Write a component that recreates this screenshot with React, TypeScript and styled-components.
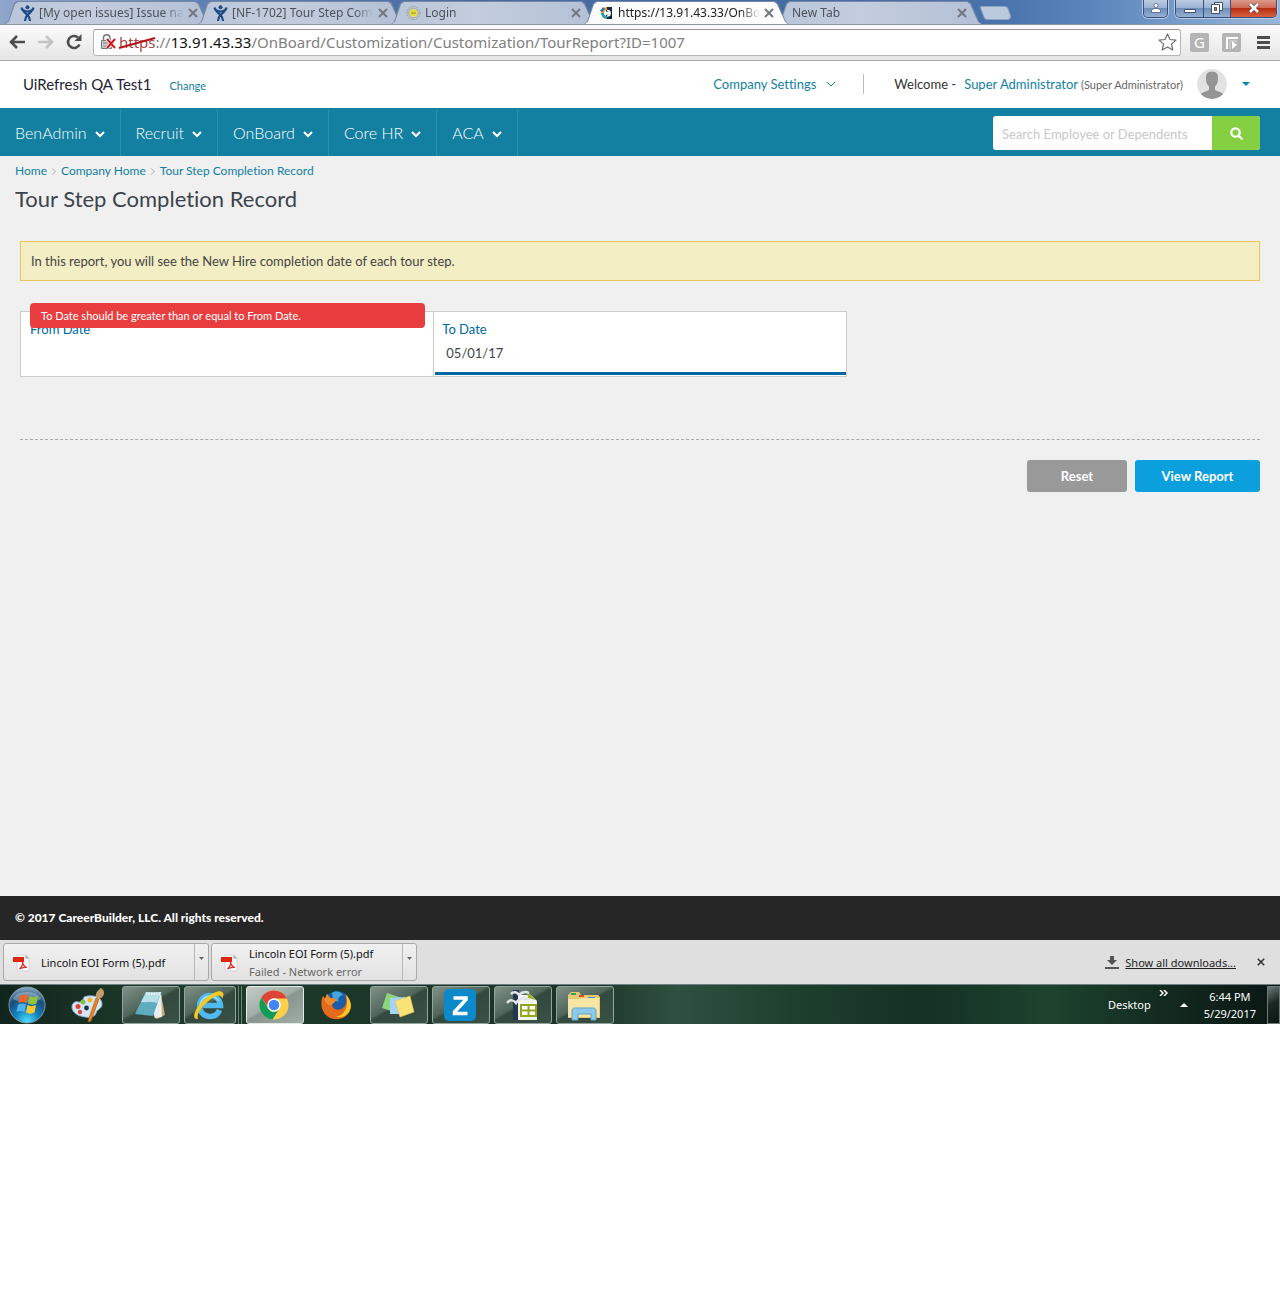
import React from 'react';
import styled, { createGlobalStyle, css } from 'styled-components';

const ui = `'Noto Sans', 'Open Sans', sans-serif`;
const lato = `Lato, 'Open Sans', sans-serif`;

const Global = createGlobalStyle`
  *, *::before, *::after { box-sizing: border-box; }
  body { margin: 0; background: #fff; font-family: ${lato}; font-size: 13px; color: #333; font-variant-ligatures: none; }
  button, input { font: inherit; color: inherit; margin: 0; padding: 0; border: 0; background: none; outline: 0; font-variant-ligatures: none; }
  button { cursor: pointer; }
  a { color: #1380a1; text-decoration: none; }
  svg { display: block; flex: none; }
  ul, ol { list-style: none; margin: 0; padding: 0; }
  h1, p { margin: 0; }
`;

/* ---------- browser frame ---------- */

const TabStrip = styled.div`
  display: flex;
  align-items: flex-end;
  height: 24px;
  padding-left: 5px;
  font-family: ${ui};
  font-size: 12px;
  background: linear-gradient(90deg, #8fa6cb 0, #5f80b3 16%, #46699f 40%, #456ba3 60%, #4a72ab 78%, #5d87bd 86%, #7fa3cf 94%, #9ab5d8 100%);
`;

const Tab = styled.div<{ $active?: boolean }>`
  position: relative;
  display: flex;
  align-items: center;
  gap: 4px;
  width: 205px;
  height: 23px;
  margin-right: -12px;
  padding: 0 15px 0 15px;
  z-index: ${p => (p.$active ? 2 : 1)};
  color: ${p => (p.$active ? '#222' : '#4d5159')};
  isolation: isolate;
  &::before, &::after {
    content: '';
    position: absolute;
    z-index: -1;
    inset: 0;
    background: #7688a6;
    clip-path: polygon(0 100%, 3px 90%, 9px 10%, 12px 0, 191px 0, 194px 10%, 202px 90%, 205px 100%);
  }
  &::after {
    inset: 1px 1px 0;
    background: ${p => (p.$active ? '#fcfcfc' : 'linear-gradient(90deg, #b9c5da, #c3cddd 40%, #b4c0d6)')};
    clip-path: polygon(0 100%, 3px 90%, 9px 10%, 12px 0, 189px 0, 192px 10%, 200px 90%, 203px 100%);
  }
`;

const TabTitle = styled.span`
  flex: 1;
  white-space: nowrap;
  mask-image: linear-gradient(90deg, #000 calc(100% - 20px), transparent);
`;

const TabClose = styled.button`
  display: flex;
  color: #74777d;
`;

const NewTabButton = styled.button`
  width: 28px;
  height: 14px;
  margin: 0 0 4px 12px;
  border: 1px solid #8fa3c3;
  border-radius: 2px 3px 5px 3px;
  background: #bccadd;
  transform: skewX(20deg);
`;

const WindowControls = styled.div`
  display: flex;
  align-self: flex-start;
  gap: 7px;
  margin-left: auto;
  padding-right: 3px;
`;

const ControlGroup = styled.div`
  display: flex;
  height: 18px;
  border: 1px solid #39507a;
  border-top: 0;
  border-radius: 0 0 5px 5px;
  overflow: hidden;
  box-shadow: 0 0 0 1px #b9cbe4;
`;

const ControlButton = styled.button<{ $wide?: boolean; $small?: boolean }>`
  display: flex;
  align-items: center;
  justify-content: center;
  width: ${p => (p.$wide ? 46 : p.$small ? 23 : 27)}px;
  padding-bottom: 2px;
  background: ${p => (p.$wide ? 'linear-gradient(#dc9a8c 0, #cd6a56 45%, #bb2b12 50%, #d4613f)' : 'linear-gradient(#bccce2 0, #9db3d3 45%, #6f8fbb 50%, #93b0d4)')};
  & + & { border-left: 1px solid #39507a; }
`;

const Toolbar = styled.div`
  display: flex;
  align-items: center;
  height: 37px;
  padding: 0 10px 1px 9px;
  background: linear-gradient(#fbfbfb, #e6e6e6);
  border-top: 1px solid #8c96a5;
  border-bottom: 1px solid #a9a9a9;
  font-family: ${ui};
`;

const ToolButton = styled.button`
  display: flex;
  align-items: center;
  margin-right: 12px;
`;

const Omnibox = styled.div`
  display: flex;
  flex: 1;
  align-items: center;
  height: 27px;
  margin: 0 9px 0 -1px;
  padding: 0 3px 0 6px;
  background: #fff;
  border: 1px solid #b5b5b5;
  border-top-color: #999;
  border-radius: 3px;
  font-size: 15px;
  color: #808080;
`;

const SiteInfo = styled.button`
  position: relative;
  display: flex;
  align-items: center;
  gap: 2px;
  color: #a5474b;
`;

const Strike = styled.svg`
  position: absolute;
  right: 0;
  top: 4px;
`;

const Host = styled.span`
  color: #111;
`;

const PathInput = styled.input`
  flex: 1;
  min-width: 0;
`;

const Extensions = styled.div`
  display: flex;
  align-items: center;
  gap: 13px;
`;

const ExtButton = styled.button`
  display: flex;
  align-items: center;
  justify-content: center;
  width: 19px;
  height: 19px;
  border-radius: 2px;
  background: #b4b4b4;
  color: #fff;
  font-size: 15px;
  line-height: 19px;
`;

const MenuButton = styled.button`
  display: flex;
  margin-left: 3px;
`;

/* ---------- application ---------- */

const Header = styled.header`
  display: flex;
  align-items: center;
  height: 47px;
  padding: 0 30px 2px 23px;
  background: #fff;
`;

const Company = styled.span`
  font-size: 15px;
  color: #1d2433;
`;

const ChangeLink = styled.a`
  margin: 3px auto 0 18px;
  font-size: 11px;
`;

const SettingsLink = styled.button`
  display: flex;
  align-items: center;
  gap: 10px;
  height: 20px;
  padding-right: 27px;
  border-right: 1px solid #bbb;
  color: #1380a1;
  font-size: 13px;
`;

const Welcome = styled.div`
  display: flex;
  align-items: baseline;
  margin: 0 14px 0 30px;
  font-size: 13px;
  a { margin: 0 3px 0 8px; }
  small { font-size: 11px; color: #666; }
`;

const AccountButton = styled.button`
  display: flex;
  align-items: center;
  gap: 15px;
`;

const Nav = styled.nav`
  display: flex;
  align-items: center;
  justify-content: space-between;
  height: 48px;
  padding-right: 20px;
  background: #1380a1;
`;

const NavList = styled.ul`
  display: flex;
  align-self: flex-end;
`;

const NavButton = styled.button`
  display: flex;
  align-items: center;
  gap: 8px;
  height: 46px;
  padding: 0 15px 2px 15px;
  border-right: 1px solid #2e8fad;
  color: #fff;
  font-size: 16px;
  font-weight: 300;
  svg { margin-top: 3px; }
`;

const Search = styled.form`
  display: flex;
  width: 267px;
  height: 34px;
  margin-top: 2px;
  border-radius: 3px;
  overflow: hidden;
  background: #fff;
  input { flex: 1; min-width: 0; padding: 2px 9px 0; font-size: 13px; }
  input::placeholder { color: #c8c8c8; opacity: 1; }
  button { display: flex; align-items: center; justify-content: center; width: 48px; background: #84d042; }
`;

const Main = styled.main`
  min-height: 740px;
  padding: 7px 15px 0;
  background: #f0f0f0;
`;

const Crumbs = styled.ol`
  display: flex;
  font-size: 12px;
  line-height: 16px;
  li { display: flex; align-items: center; }
  li + li::before {
    content: '';
    width: 5px;
    height: 5px;
    margin: 0 6px 0 3px;
    border: solid #c4c4c4;
    border-width: 1px 1px 0 0;
    transform: rotate(45deg);
  }
`;

const Title = styled.h1`
  margin-top: 6px;
  font-size: 22px;
  line-height: 28px;
  font-weight: 400;
  color: #3c434d;
`;

const Body = styled.div`
  padding: 28px 5px 0;
`;

const Notice = styled.p`
  padding: 0 10px;
  border: 1px solid #e8c556;
  background: #f4eec5;
  line-height: 38px;
  color: #444;
`;

const Fields = styled.div`
  display: grid;
  grid-template-columns: 1fr 1fr;
  width: calc(200% / 3);
  margin-top: 30px;
  border: 1px solid #ccc;
  background: #fff;
`;

const Field = styled.div<{ $focused?: boolean }>`
  position: relative;
  display: flex;
  flex-direction: column;
  height: 64px;
  padding: 7px 9px 0;
  & + & { padding-left: 8px; border-left: 1px solid #ccc; }
  label { line-height: 20px; color: #0067a3; }
  input { height: 20px; margin-top: 4px; padding: 0 4px; color: #444; }
  ${p => p.$focused && css`
    &::after { content: ''; position: absolute; left: 1px; right: 0; bottom: 1px; height: 3px; background: #0067a3; }
  `}
`;

const FieldError = styled.div`
  position: absolute;
  top: -9px;
  left: 9px;
  right: 8px;
  padding: 0 11px;
  border-radius: 4px;
  background: #e83e3f;
  color: #fff;
  font-size: 11px;
  line-height: 25px;
`;

const Actions = styled.div`
  display: flex;
  justify-content: flex-end;
  gap: 8px;
  margin-top: 62px;
  padding-top: 20px;
  border-top: 1px dashed #aaa;
`;

const ActionButton = styled.button<{ $primary?: boolean }>`
  width: ${p => (p.$primary ? 125 : 100)}px;
  height: 32px;
  padding-bottom: 1px;
  border-radius: 3px;
  background: ${p => (p.$primary ? '#0b9fde' : '#999')};
  color: #fff;
  font-size: 13px;
  font-weight: 700;
`;

const Footer = styled.footer`
  padding: 0 15px;
  background: #262626;
  color: #fff;
  font-size: 12px;
  font-weight: 900;
  line-height: 44px;
`;

/* ---------- download shelf ---------- */

const Shelf = styled.div`
  display: flex;
  align-items: center;
  gap: 2px;
  height: 44px;
  padding: 0 15px 0 3px;
  background: #dfdfdf;
  font-family: ${ui};
  font-size: 11px;
`;

const Download = styled.div`
  display: flex;
  width: 206px;
  height: 38px;
  border: 1px solid #a9a9a9;
  border-radius: 3px;
  background: linear-gradient(#f1f1f1, #e2e2e2);
`;

const DownloadFile = styled.button`
  display: flex;
  flex: 1;
  align-items: center;
  gap: 10px;
  padding: 1px 0 0 9px;
  text-align: left;
  line-height: 18px;
  color: #111;
  small { display: block; font-size: 11px; color: #666; }
`;

const DownloadMenu = styled.button`
  display: flex;
  justify-content: center;
  width: 14px;
  padding-top: 13px;
  border-left: 1px solid #b8b8b8;
`;

const ShowAll = styled.a`
  display: flex;
  align-items: center;
  gap: 6px;
  margin: 0 19px 0 auto;
  color: #222;
  span { text-decoration: underline; }
`;

/* ---------- taskbar ---------- */

const Taskbar = styled.div`
  display: flex;
  align-items: center;
  gap: 4px;
  height: 40px;
  background: linear-gradient(90deg, #12251c 0, #1d3a2a 12%, #1a3326 45%, #2f5040 53%, #1e3f2e 62%, #143024 72%, #1d432e 82%, #12271e 92%, #0a1713 100%);
  border-top: 1px solid #6d8082;
  font-family: ${ui};
  font-size: 11px;
  color: #fff;
`;

const TaskButton = styled.button<{ $kind?: 'open' | 'active' | 'start' }>`
  display: flex;
  align-items: center;
  justify-content: center;
  width: ${p => (p.$kind === 'start' ? 56 : 58)}px;
  height: 38px;
  padding-right: 2px;
  border: 1px solid transparent;
  border-radius: 3px;
  ${p => p.$kind === 'open' && css`
    border-color: #93a49c;
    background: linear-gradient(150deg, #7f9088 0, #50665b 45%, #33493e 50%, #3a5145 100%);
  `}
  ${p => p.$kind === 'active' && css`
    border-color: #e3e9e6;
    background: linear-gradient(150deg, #c4ccc8 0, #a3aea8 45%, #87958e 50%, #a3afa9 100%);
  `}
`;

const Stack = styled.div`
  display: flex;
  width: 58px;
  padding-right: 5px;
  border-right: 1px solid #6f8379;
  position: relative;
  &::after { content: ''; position: absolute; right: 2px; top: 0; bottom: 0; width: 1px; background: #6f8379; }
`;

const Tray = styled.div`
  display: flex;
  align-items: center;
  height: 100%;
  margin-left: auto;
`;

const Overflow = styled.button`
  align-self: flex-start;
  margin: 5px 12px 0 8px;
`;

const Clock = styled.div`
  margin: 0 11px 0 16px;
  line-height: 17px;
  text-align: center;
`;

const ShowDesktop = styled.button`
  width: 13px;
  height: 38px;
  border: 1px solid #6d7a75;
  background: linear-gradient(150deg, #6d7a75, #1b2824 45%, #0c1714);
`;

/* ---------- drawings ---------- */

const Chevron = ({ color = '#fff', w = 2 }: { color?: string; w?: number }) => (
  <svg width="10" height="8" viewBox="0 0 10 8" fill="none" stroke={color} strokeWidth={w}>
    <path d="M1 2l4 4 4-4" />
  </svg>
);

const Cross = ({ size = 10, w = 2 }: { size?: number; w?: number }) => (
  <svg width={size} height={size} viewBox="0 0 10 10" stroke="currentColor" strokeWidth={w}>
    <path d="M1 1l8 8M9 1L1 9" />
  </svg>
);

const Caret = ({ color, up }: { color: string; up?: boolean }) => (
  <svg width="8" height="4" viewBox="0 0 8 4" fill={color}>
    <path d={up ? 'M0 4L4 0l4 4z' : 'M0 0h8L4 4z'} />
  </svg>
);

const JiraIcon = () => (
  <svg width="15" height="16" viewBox="0 0 15 16" fill="none" stroke="#1e4b85">
    <circle cx="7.500" cy="2.200" r="2" fill="#1e4b85" stroke="none" />
    <path d="M1.500 2.500c.5 3.500 2.500 4 6 4s5.500-.5 6-4" strokeWidth="2.200" />
    <path d="M3.500 6c1 2 2.500 2.500 4 4s2.500 3 2.500 6M11.500 6c-1 2-2.500 2.500-4 4S5 13 5 16" strokeWidth="2.200" />
  </svg>
);

const LoginIcon = () => (
  <svg width="15" height="16" viewBox="0 0 16 16" fill="none">
    <circle cx="8" cy="8" r="7" stroke="#999b8c" strokeDasharray="2 1" />
    <circle cx="8" cy="8" r="5" fill="#d9d9b4" stroke="#aaa98a" />
    <circle cx="8" cy="8" r="3.500" fill="#e9dc2d" />
    <path d="M5.500 8h5" stroke="#8c8740" />
  </svg>
);

const SiteIcon = () => (
  <svg width="15" height="14" viewBox="-1 0 15 14">
    <path d="M6 1h6v12H6z" fill="#12294a" />
    <path d="M7 1A6 6 0 0 0 1 7h3a3 3 0 0 1 3-3z" fill="#f09a32" />
    <path d="M1 7a6 6 0 0 0 6 6v-3a3 3 0 0 1-3-3z" fill="#22a096" />
    <path d="M0 5l3-4 2 2-3 3z" fill="#2a6fb5" />
    <path d="M7 4.500c2 0 3 1 3 2H6v1.500h4C10 9 9 10 7 10" fill="none" stroke="#fff" strokeWidth="1.500" />
  </svg>
);

const PdfIcon = () => (
  <svg width="18" height="18" viewBox="0 0 18 18">
    <path d="M4 1h9l3 3v13H4z" fill="#f6f6f6" stroke="#c9c9c9" strokeWidth=".6" />
    <path d="M12.500 1v3.500H16z" fill="#a5a5a5" />
    <path d="M0 3h11v5H0z" fill="#e2230f" />
    <path d="M9.500 8c.8 3.500 2 5 4.500 5.500-3-.6-5-.2-7.500 1.500C9 13 10 11 9.500 8z" fill="none" stroke="#dd3427" strokeWidth="1.200" />
  </svg>
);

const WindowsOrb = () => (
  <svg width="38" height="38" viewBox="0 0 38 38">
    <defs>
      <radialGradient id="orb" cx=".5" cy=".95" r=".95">
        <stop offset="0" stopColor="#4fe0ff" /><stop offset=".35" stopColor="#1583be" />
        <stop offset=".7" stopColor="#1b4b78" /><stop offset="1" stopColor="#8fb0c8" />
      </radialGradient>
    </defs>
    <circle cx="19" cy="19" r="18" fill="url(#orb)" stroke="#7d9aac" />
    <path d="M5 13a15 11 0 0 1 28 0c-6 4-20 5-28 0z" fill="#fff" opacity=".3" />
    <path d="M12 10c3-2 5-2 8-.5L18.500 17c-3-1.500-5-1.500-8 0z" fill="#f0642a" />
    <path d="M21.500 10c3 1.500 5 1.500 8.500 0L28.500 17.500c-3 1.500-5.500 1.500-8.500 0z" fill="#8fc63d" />
    <path d="M10 18.500c3-1.500 5-1.500 8 0L16.500 26c-3-1.500-5-1.500-8 0z" fill="#4cb2ee" />
    <path d="M19.500 19c3 1.500 5.500 1.500 8.500 0L26.500 26.500c-3 1.500-5.500 1.500-8.500 0z" fill="#fcc927" />
  </svg>
);

const PaintIcon = () => (
  <svg width="34" height="34" viewBox="0 0 34 34">
    <path d="M13 9c9-3 18 0 18 7 0 5-5 5-6 9-1 4-6 5-11 4C6 28 1 24 1 19c0-4 3-6 6-5s6-3 6-5z" fill="#d4e6f5" stroke="#8eb0cf" />
    <circle cx="7" cy="18.500" r="2.500" fill="#e2452e" /><circle cx="9" cy="24" r="2.200" fill="#d9483a" />
    <circle cx="12" cy="14" r="2.500" fill="#7fc043" /><circle cx="19" cy="12" r="2.500" fill="#f2b632" />
    <circle cx="15.500" cy="20" r="2.400" fill="#234" />
    <path d="M25 10l3 1-8 22-3 1 1-4z" fill="#e88324" stroke="#a9540f" strokeWidth=".6" />
    <path d="M25 9c-1-4 2-7 5-9 3 2 4 5 2 8-2 3-5 4-7 1z" fill="#c69c6c" />
  </svg>
);

const NotepadIcon = () => (
  <svg width="32" height="32" viewBox="0 0 32 32">
    <path d="M27 5l4 21-8 4-3-2z" fill="#c9a877" />
    <path d="M12 3h15l1 25-7 1z" fill="#e9eef0" />
    <path d="M12 3l15 1-8 23L1 25z" fill="#5fabc0" />
    <path d="M12 3l15 1-4 10C17 12 12 14 7 13z" fill="#b6dfe8" />
    <path d="M12 4.500l15 1" stroke="#eee" strokeWidth="2" strokeDasharray="1.500 1" />
  </svg>
);

const ExplorerEIcon = () => (
  <svg width="32" height="32" viewBox="0 0 32 32" fill="none">
    <path d="M26.500 21c-1.500 4-5 6.500-9.500 6.500a10.500 10.500 0 1 1 10.500-11H10" stroke="#4fb9f0" strokeWidth="5.500" />
    <path d="M7 17A10 10 0 0 1 17 7c4 0 7 2 9 5" stroke="#a3e1fb" strokeWidth="1.500" />
    <path d="M5 30c-6 1-5-7 3-16S27-1 30 4c1 2 0 4-1 6 0-4-4-5-11 0C9 17 3 25 5 30z" fill="#f7c81e" />
  </svg>
);

const ChromeIcon = () => (
  <svg width="30" height="30" viewBox="0 0 30 30">
    <circle cx="15" cy="15" r="14.500" fill="#fcd04b" />
    <path d="M2.500 7.500A14.500 14.500 0 0 1 28 8.500H15a6.500 6.500 0 0 0-6 9z" fill="#db4437" />
    <path d="M2.500 7.500A14.500 14.500 0 0 0 13.500 29.500L20.500 18.500a6.500 6.500 0 0 1-11.500-.5z" fill="#109d59" />
    <circle cx="15" cy="15" r="6.700" fill="#fff" /><circle cx="15" cy="15" r="5.300" fill="#4285f4" />
  </svg>
);

const FirefoxIcon = () => (
  <svg width="32" height="32" viewBox="0 0 32 32">
    <circle cx="17" cy="15" r="13" fill="#1c5ba5" />
    <path d="M12 4c5-3 9-1 11 2-4 1-6 4-4 7l-6-2z" fill="#47a7dc" />
    <path d="M25 5c6 5 8 14 3 20-6 7-17 7-23 0C0 19 1 11 3 7l2 3 2-5 3 4c2 0 5 0 6 2-1 3-4 3-4 5 1 5 7 6 11 3s4-9 2-14z" fill="#e66a1c" />
    <path d="M26 6c5 5 7 12 2 18-3 4-8 5-12 4 9-2 13-11 10-22z" fill="#fbc829" />
    <path d="M3 7l2 3 2-5 3 4c2 0 5 0 6 2-1 3-4 3-4 5-4 2-8-4-9-9z" fill="#f08b2a" />
  </svg>
);

const NotesIcon = () => (
  <svg width="34" height="30" viewBox="0 0 34 30">
    <path d="M6 3l15 5-5 15L1 18z" fill="#8ed47c" />
    <path d="M9 8l15-1 1 17H9z" fill="#a4d3fb" />
    <path d="M14 11l15-5 4 16-14 5z" fill="#fbe277" stroke="#dcc35b" strokeWidth=".6" />
  </svg>
);

const ZIcon = () => (
  <svg width="32" height="32" viewBox="0 0 32 32">
    <rect width="32" height="32" rx="5" fill="#0b89cb" />
    <path d="M9.500 9H22v1.500L10.500 23v1.500H23.500" fill="none" stroke="#fff" strokeWidth="3.500" />
  </svg>
);

const CalcIcon = () => (
  <svg width="32" height="32" viewBox="0 0 32 32">
    <path d="M7 1h6v30H7z" fill="#23374e" />
    <path d="M12 6h13l6 6v19H12z" fill="#f2f4f0" />
    <path d="M21 2l9 9-8-2z" fill="#9db52a" />
    <path d="M15 16h15v11H15zM22.500 16v11M15 21.500h15" fill="#fff" stroke="#93a51c" strokeWidth="2" />
    <path d="M1 14c3-4 7-3 9 0 3-5 8-6 13-3M5 5c3-3 6-2 8 1 3-3 6-4 10-2" fill="none" stroke="#dfe5e8" strokeWidth="2.500" />
  </svg>
);

const FolderIcon = () => (
  <svg width="34" height="32" viewBox="0 0 34 32">
    <path d="M1 6l3-3h8l2 3h17l2 2v21H1z" fill="#e7c974" />
    <path d="M4 4h5v2H4z" fill="#2ca64c" /><path d="M12 6h5v2h-5z" fill="#d34a35" /><path d="M21 8h7v2h-7z" fill="#3d91cc" />
    <path d="M1 10h12l2-1h17v19H1z" fill="#f7e5a5" />
    <path d="M5 31V22c0-2 1-3 3-3h18c2 0 3 1 3 3v9h-5v-6H11v6z" fill="#8fcbe8" stroke="#5ca5cc" />
  </svg>
);

const Avatar = () => (
  <svg width="30" height="30" viewBox="0 0 30 30">
    <defs><clipPath id="face"><circle cx="15" cy="15" r="15" /></clipPath></defs>
    <g clipPath="url(#face)">
      <path fill="#e2e2e2" d="M0 0h30v30H0z" />
      <path fill="#949494" d="M15 2.500c4.500 0 6.500 3 6 7.500 0 4-1.500 6-3 7.500v3c1 2 7 2.500 9 5L24 30H6l-3-4.500c2-2.500 8-3 9-5v-3C10.500 16 9 14 9 10c-.5-4.500 1.500-7.500 6-7.500z" />
    </g>
  </svg>
);

/* ---------- data ---------- */

const tabs = [
  { title: '[My open issues] Issue na', icon: <JiraIcon /> },
  { title: '[NF-1702] Tour Step Com', icon: <JiraIcon /> },
  { title: 'Login', icon: <LoginIcon /> },
  { title: 'https://13.91.43.33/OnBo', icon: <SiteIcon />, active: true },
  { title: 'New Tab' },
];
const menus = ['BenAdmin', 'Recruit', 'OnBoard', 'Core HR', 'ACA'];
const crumbs = ['Home', 'Company Home', 'Tour Step Completion Record'];
const downloads = [{ name: 'Lincoln EOI Form (5).pdf' }, { name: 'Lincoln EOI Form (5).pdf', note: 'Failed - Network error' }];

function BrowserChrome() {
  return (
    <>
      <TabStrip>
        {tabs.map(t => (
          <Tab key={t.title} $active={t.active}>
            {t.icon}
            <TabTitle>{t.title}</TabTitle>
            <TabClose aria-label={`Close ${t.title}`}><Cross /></TabClose>
          </Tab>
        ))}
        <NewTabButton aria-label="New tab" />
        <WindowControls>
          <ControlGroup>
            <ControlButton $small aria-label="Profile">
              <svg width="10" height="10" viewBox="0 0 10 10" fill="#fff" stroke="#44536b" strokeWidth=".7"><circle cx="5" cy="2.500" r="2" /><path d="M.5 9.500V7L3 5.500h4L9.500 7v2.500z" /></svg>
            </ControlButton>
          </ControlGroup>
          <ControlGroup>
            <ControlButton aria-label="Minimize">
              <svg width="12" height="12" viewBox="0 0 12 12"><path d="M.5 7.500h11v3H.5z" fill="#fff" stroke="#44536b" /></svg>
            </ControlButton>
            <ControlButton aria-label="Restore">
              <svg width="12" height="12" viewBox="0 0 12 12" fill="#fff" stroke="#44536b"><path d="M3.500.5h8v8h-8z" /><path d="M.5 2.500h8v9h-8z" /><path d="M3.500 5.500h2v3h-2z" fill="#7893ba" /></svg>
            </ControlButton>
            <ControlButton $wide aria-label="Close window">
              <svg width="12" height="10" viewBox="0 0 12 10" fill="none"><path d="M2 1l8 8M10 1L2 9" stroke="#5a3a3c" strokeWidth="4" /><path d="M2 1l8 8M10 1L2 9" stroke="#fff" strokeWidth="2.600" /></svg>
            </ControlButton>
          </ControlGroup>
        </WindowControls>
      </TabStrip>
      <Toolbar>
        <ToolButton aria-label="Back">
          <svg width="17" height="14" viewBox="0 0 17 14" fill="none" stroke="#4d4d4d" strokeWidth="2.600"><path d="M16 7H3M8 1L2 7l6 6" /></svg>
        </ToolButton>
        <ToolButton aria-label="Forward">
          <svg width="16" height="14" viewBox="0 0 16 14" fill="none" stroke="#c4c4c4" strokeWidth="2.600"><path d="M0 7h13M8 1l6 6-6 6" /></svg>
        </ToolButton>
        <ToolButton aria-label="Reload">
          <svg width="16" height="16" viewBox="0 0 16 16" fill="none" stroke="#4d4d4d" strokeWidth="2.600"><path d="M13.500 10.500A6 6 0 1 1 12 3.500" /><path d="M15.500 0v7h-7z" fill="#4d4d4d" stroke="none" /></svg>
        </ToolButton>
        <Omnibox>
          <SiteInfo aria-label="Site information">
            <svg width="17" height="16" viewBox="0 0 17 16" fill="none">
              <path d="M3.500 8V4a3 3 0 0 1 6.500 0v4" stroke="#777" strokeWidth="1.500" />
              <path d="M1.500 6.500h10v8h-10z" fill="#ccc" stroke="#777" /><path d="M3 9h7M3 12h7" stroke="#888" />
              <path d="M7 5l8 9M15 5l-8 9" stroke="#fff" strokeWidth="3.500" /><path d="M7 5l8 9M15 5l-8 9" stroke="#d0161c" strokeWidth="2" />
            </svg>
            <span>https</span>
            <Strike width="38" height="14" viewBox="0 0 38 14"><path d="M1 12L37 2" stroke="#b3131b" strokeWidth="2" /></Strike>
          </SiteInfo>
          <span>://</span>
          <Host>13.91.43.33</Host>
          <PathInput aria-label="Address" defaultValue="/OnBoard/Customization/Customization/TourReport?ID=1007" />
          <button aria-label="Bookmark this page">
            <svg width="19" height="18" viewBox="0 0 19 18" fill="#fff" stroke="#6e6e6e" strokeWidth="1.200" strokeLinejoin="round"><path d="M9.500 1l2.500 5.500 6 .6-4.500 4 1.300 5.900-5.300-3-5.300 3 1.300-5.900L1 7.100l6-.6z" /></svg>
          </button>
        </Omnibox>
        <Extensions>
          <ExtButton aria-label="G extension">G</ExtButton>
          <ExtButton aria-label="Recorder extension">
            <svg width="15" height="15" viewBox="0 0 15 15" fill="none"><path d="M3 14V3h11" stroke="#fff" strokeWidth="2" /><path d="M6 14V6h7" stroke="#ddd" /><path d="M8 6l5 4-5 4z" fill="#fff" /></svg>
          </ExtButton>
          <MenuButton aria-label="Browser menu">
            <svg width="13" height="13" viewBox="0 0 13 13" stroke="#4d4d4d" strokeWidth="3"><path d="M0 1.500h13M0 6.500h13M0 11.500h13" /></svg>
          </MenuButton>
        </Extensions>
      </Toolbar>
    </>
  );
}

function Report() {
  return (
    <>
      <Header>
        <Company>UiRefresh QA Test1</Company>
        <ChangeLink href="#change">Change</ChangeLink>
        <SettingsLink>Company Settings <Chevron color="#1380a1" w={1} /></SettingsLink>
        <Welcome>
          <span>Welcome -</span>
          <a href="#profile">Super Administrator</a>
          <small>(Super Administrator)</small>
        </Welcome>
        <AccountButton aria-label="Account menu"><Avatar /><Caret color="#0b87a9" /></AccountButton>
      </Header>
      <Nav>
        <NavList>
          {menus.map(m => <li key={m}><NavButton>{m} <Chevron /></NavButton></li>)}
        </NavList>
        <Search onSubmit={e => e.preventDefault()}>
          <input aria-label="Search Employee or Dependents" placeholder="Search Employee or Dependents" />
          <button aria-label="Search">
            <svg width="13" height="13" viewBox="0 0 13 13" fill="none" stroke="#fff" strokeWidth="2.200"><circle cx="5.500" cy="5.500" r="4.200" /><path d="M8.500 8.500l4 4" /></svg>
          </button>
        </Search>
      </Nav>
      <Main>
        <Crumbs>{crumbs.map(c => <li key={c}><a href="#crumb">{c}</a></li>)}</Crumbs>
        <Title>Tour Step Completion Record</Title>
        <Body>
          <Notice>In this report, you will see the New Hire completion date of each tour step.</Notice>
          <Fields>
            <Field>
              <label htmlFor="from">From Date</label>
              <input id="from" />
              <FieldError role="alert">To Date should be greater than or equal to From Date.</FieldError>
            </Field>
            <Field $focused>
              <label htmlFor="to">To Date</label>
              <input id="to" defaultValue="05/01/17" />
            </Field>
          </Fields>
          <Actions>
            <ActionButton>Reset</ActionButton>
            <ActionButton $primary>View Report</ActionButton>
          </Actions>
        </Body>
      </Main>
      <Footer>© 2017 CareerBuilder, LLC. All rights reserved.</Footer>
    </>
  );
}

export default function App() {
  return (
    <>
      <Global />
      <BrowserChrome />
      <Report />
      <Shelf>
        {downloads.map((d, i) => (
          <Download key={i}>
            <DownloadFile><PdfIcon /><span>{d.name}{d.note && <small>{d.note}</small>}</span></DownloadFile>
            <DownloadMenu aria-label="Download options"><svg width="5" height="3" viewBox="0 0 5 3" fill="#666"><path d="M0 0h5L2.500 3z" /></svg></DownloadMenu>
          </Download>
        ))}
        <ShowAll href="#downloads">
          <svg width="14" height="13" viewBox="0 0 14 13" fill="#555"><path d="M5 0h4v4h3L7 9 2 4h3zM0 11h14v2H0z" /></svg>
          <span>Show all downloads...</span>
        </ShowAll>
        <button aria-label="Close downloads bar"><Cross size={8} /></button>
      </Shelf>
      <Taskbar>
        <TaskButton $kind="start" aria-label="Start"><WindowsOrb /></TaskButton>
        <TaskButton aria-label="Paint"><PaintIcon /></TaskButton>
        <TaskButton $kind="open" aria-label="Notepad"><NotepadIcon /></TaskButton>
        <Stack><TaskButton $kind="open" aria-label="Internet Explorer"><ExplorerEIcon /></TaskButton></Stack>
        <TaskButton $kind="active" aria-label="Chrome"><ChromeIcon /></TaskButton>
        <TaskButton aria-label="Firefox"><FirefoxIcon /></TaskButton>
        <TaskButton $kind="open" aria-label="Sticky Notes"><NotesIcon /></TaskButton>
        <TaskButton $kind="open" aria-label="Z"><ZIcon /></TaskButton>
        <TaskButton $kind="open" aria-label="Calc"><CalcIcon /></TaskButton>
        <TaskButton $kind="open" aria-label="Explorer"><FolderIcon /></TaskButton>
        <Tray>
          <span>Desktop</span>
          <Overflow aria-label="More toolbar items">
            <svg width="9" height="6" viewBox="0 0 9 6" fill="none" stroke="#fff" strokeWidth="1.500"><path d="M1 0l3 3-3 3M5 0l3 3-3 3" /></svg>
          </Overflow>
          <button aria-label="Show hidden icons"><Caret color="#fff" up /></button>
          <Clock>6:44 PM<br />5/29/2017</Clock>
          <ShowDesktop aria-label="Show desktop" />
        </Tray>
      </Taskbar>
    </>
  );
}
